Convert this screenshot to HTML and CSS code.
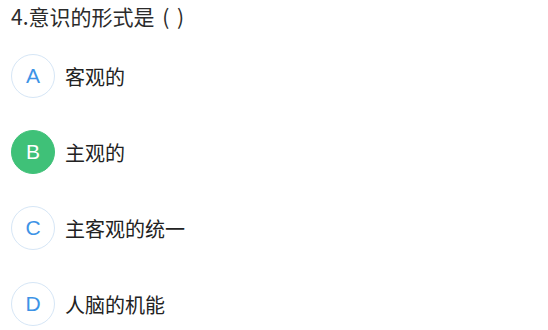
FILE: index.html
```html
<!DOCTYPE html>
<html lang="zh-CN">
<head>
<meta charset="utf-8">
<link rel="stylesheet" href="styles.css">
</head>
<body>
<div class="question">
  <div class="title">4.意识的形式是 ( )</div>
  <ul class="options">
    <li class="option"><span class="badge">A</span><span class="label">客观的</span></li>
    <li class="option selected"><span class="badge">B</span><span class="label">主观的</span></li>
    <li class="option"><span class="badge">C</span><span class="label">主客观的统一</span></li>
    <li class="option"><span class="badge">D</span><span class="label">人脑的机能</span></li>
  </ul>
</div>
</body>
</html>
```
FILE: styles.css
```css
html, body {
  margin: 0;
  padding: 0;
  background: #ffffff;
}
body {
  font-family: "Noto Sans CJK SC", "Noto Sans", sans-serif;
  color: #333333;
}
.question {
  padding: 3px 0 0 10px;
}
.title {
  font-size: 21px;
  line-height: 26px;
  color: #2b2b2b;
  word-spacing: 3px;
  padding-left: 1px;
}
.options {
  list-style: none;
  margin: 25px 0 0 0;
  padding: 0 0 0 1px;
  display: flex;
  flex-direction: column;
  gap: 32px;
}
.option {
  display: flex;
  align-items: center;
  gap: 10px;
  height: 44px;
}
.badge {
  box-sizing: border-box;
  width: 44px;
  height: 44px;
  border-radius: 50%;
  border: 1px solid #d6e6f6;
  color: #3d93e6;
  font-family: "Liberation Sans", "Noto Sans", sans-serif;
  font-size: 21px;
  display: flex;
  align-items: center;
  justify-content: center;
}
.selected .badge {
  background: #3fc178;
  border-color: #3fc178;
  color: #ffffff;
}
.label {
  font-size: 20px;
  color: #222222;
}
```
